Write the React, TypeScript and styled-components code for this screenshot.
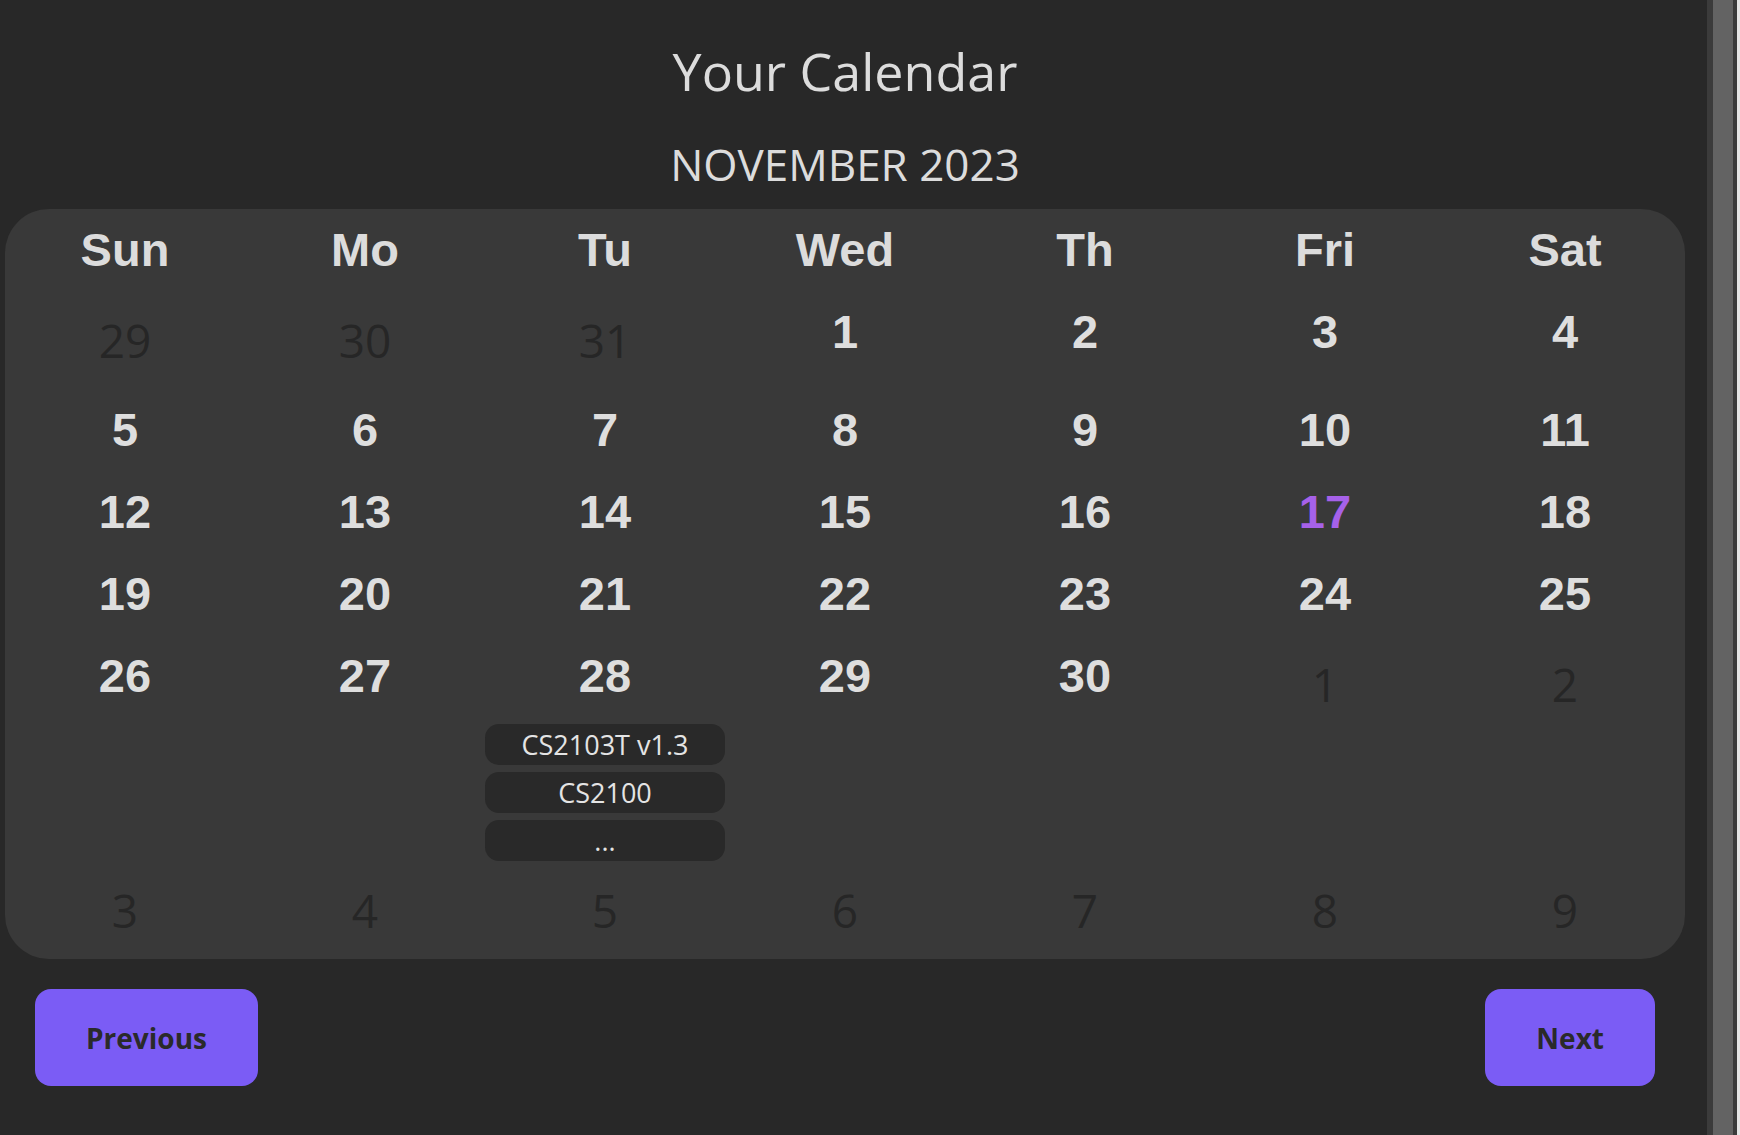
import styled, { createGlobalStyle } from "styled-components";

const GlobalStyle = createGlobalStyle`
  html, body {
    margin: 0;
    padding: 0;
    background-color: #282828;
    overflow: hidden;
  }
  * {
    box-sizing: border-box;
  }
`;

const Page = styled.div`
  display: flex;
  width: 100vw;
  height: 100vh;
  background-color: #282828;
`;

const Main = styled.main`
  flex: 1;
  padding: 35px 0 0 5px;
`;

const Column = styled.div`
  width: 1680px;
  display: flex;
  flex-direction: column;
  align-items: center;
`;

const Title = styled.h1`
  margin: 0;
  font-family: "Open Sans", "Noto Sans", sans-serif;
  font-weight: 400;
  font-size: 52px;
  line-height: 72px;
  color: #dcdcdc;
`;

const Month = styled.h2`
  margin: 27px 0 15px;
  font-family: "Open Sans", "Noto Sans", sans-serif;
  font-weight: 400;
  font-size: 44px;
  line-height: 60px;
  color: #dcdcdc;
`;

const Card = styled.section`
  width: 100%;
  background-color: #393939;
  border-radius: 44px;
  overflow: hidden;
`;

const WeekRow = styled.div`
  display: grid;
  grid-template-columns: repeat(7, 240px);
  align-items: start;
`;

const HeadCell = styled.div`
  height: 82px;
  line-height: 82px;
  text-align: center;
  font-family: "Liberation Sans", Arial, sans-serif;
  font-weight: 700;
  font-size: 47px;
  color: #dcdcdc;
`;

const DayCell = styled.div`
  display: flex;
  flex-direction: column;
  align-items: center;
`;

const DayNumber = styled.div<{ $muted?: boolean; $today?: boolean }>`
  height: ${(p) => (p.$muted ? "98px" : "82px")};
  line-height: ${(p) => (p.$muted ? "98px" : "82px")};
  font-family: ${(p) =>
    p.$muted
      ? `"Open Sans", "Noto Sans", sans-serif`
      : `"Liberation Sans", Arial, sans-serif`};
  font-weight: ${(p) => (p.$muted ? 400 : 700)};
  font-size: ${(p) => (p.$muted ? "46px" : "47px")};
  color: ${(p) => (p.$muted ? "#262626" : p.$today ? "#a661e9" : "#dedede")};
`;

const EventList = styled.div`
  width: 100%;
  display: flex;
  flex-direction: column;
  gap: 7px;
  padding-top: 7px;
`;

const EventPill = styled.div`
  height: 41px;
  line-height: 41px;
  border-radius: 14px;
  background-color: #292929;
  text-align: center;
  font-family: "Open Sans", "Noto Sans", sans-serif;
  font-size: 27px;
  color: #e4e4e4;
`;

const ButtonRow = styled.div`
  width: 100%;
  display: flex;
  justify-content: space-between;
  padding: 30px 30px 0 30px;
`;

const NavButton = styled.button`
  height: 97px;
  padding: 0 51px;
  border: none;
  border-radius: 16px;
  background-color: #7b5cf5;
  font-family: "Open Sans", "Noto Sans", sans-serif;
  font-weight: 700;
  font-size: 28px;
  color: #2a2a2a;
  cursor: pointer;
`;

const ScrollRail = styled.div`
  width: 33px;
  height: 100%;
  display: flex;
  background-color: #3b3b3b;
  padding-left: 6px;
  border-right: 3px solid #e6e6e6;
`;

const ScrollThumb = styled.div`
  width: 20px;
  height: 100%;
  background-color: #636363;
`;

type Day = { n: number; muted?: boolean; today?: boolean; events?: string[] };

const headers = ["Sun", "Mo", "Tu", "Wed", "Th", "Fri", "Sat"];

const weeks: Day[][] = [
  [
    { n: 29, muted: true },
    { n: 30, muted: true },
    { n: 31, muted: true },
    { n: 1 },
    { n: 2 },
    { n: 3 },
    { n: 4 },
  ],
  [5, 6, 7, 8, 9, 10, 11].map((n) => ({ n })),
  [12, 13, 14, 15, 16, 17, 18].map((n) => ({ n, today: n === 17 })),
  [19, 20, 21, 22, 23, 24, 25].map((n) => ({ n })),
  [
    { n: 26 },
    { n: 27 },
    { n: 28, events: ["CS2103T v1.3", "CS2100", "..."] },
    { n: 29 },
    { n: 30 },
    { n: 1, muted: true },
    { n: 2, muted: true },
  ],
  [3, 4, 5, 6, 7, 8, 9].map((n) => ({ n, muted: true })),
];

export default function App() {
  return (
    <>
      <GlobalStyle />
      <Page>
        <Main>
          <Column>
            <Title>Your Calendar</Title>
            <Month>NOVEMBER 2023</Month>
            <Card>
              <WeekRow>
                {headers.map((h) => (
                  <HeadCell key={h}>{h}</HeadCell>
                ))}
              </WeekRow>
              {weeks.map((week, i) => (
                <WeekRow key={i}>
                  {week.map((d, j) => (
                    <DayCell key={j}>
                      <DayNumber $muted={d.muted} $today={d.today}>
                        {d.n}
                      </DayNumber>
                      {d.events && (
                        <EventList>
                          {d.events.map((e) => (
                            <EventPill key={e}>{e}</EventPill>
                          ))}
                        </EventList>
                      )}
                    </DayCell>
                  ))}
                </WeekRow>
              ))}
            </Card>
            <ButtonRow>
              <NavButton>Previous</NavButton>
              <NavButton>Next</NavButton>
            </ButtonRow>
          </Column>
        </Main>
        <ScrollRail>
          <ScrollThumb />
        </ScrollRail>
      </Page>
    </>
  );
}
